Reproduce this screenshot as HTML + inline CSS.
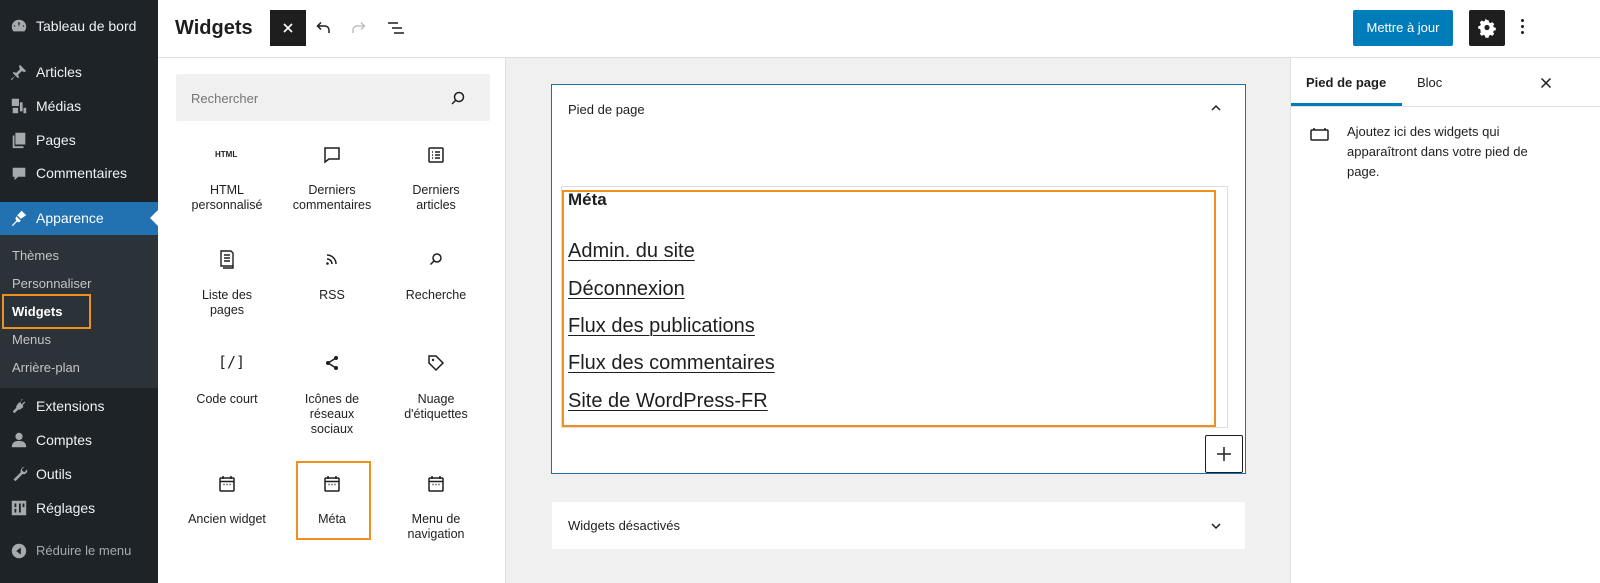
<!DOCTYPE html>
<html><head><meta charset="utf-8">
<style>
*{box-sizing:border-box;margin:0;padding:0}
body{width:1600px;height:583px;overflow:hidden;font-family:"Liberation Sans",sans-serif;background:#fff;position:relative;color:#1e1e1e}
.a{position:absolute}
#side{left:0;top:0;width:158px;height:583px;background:#1d2327}
.mi{position:absolute;left:36px;color:#f0f0f1;font-size:14px;white-space:nowrap}
.ic{position:absolute;left:10px;width:18px;height:18px;fill:#a7aaad}
.sm{position:absolute;left:12px;color:#c3c4c7;font-size:13px}
.lbl{position:absolute;width:110px;text-align:center;font-size:12.5px;line-height:15px;color:#1e1e1e}
.gi{position:absolute;width:24px;height:24px}
.lnk{position:absolute;left:568px;font-size:20px;text-decoration:underline;text-decoration-thickness:1px;text-underline-offset:3px;color:#1e1e1e}
</style></head><body>
<div id="side" class="a">
  <svg class="ic" style="top:17px" viewBox="0 0 20 20"><path d="M10 3a8 8 0 0 0-8 8c0 2 .7 3.7 2 5h12a8 8 0 0 0 2-5 8 8 0 0 0-8-8zm0 2.5l1 1-1 4.5-1-4.5zM5 9l1 1-1 1-1-1zm10 0l1 1-1 1-1-1z"/></svg>
  <div class="mi" style="top:18px">Tableau de bord</div>
  <svg class="ic" style="top:63px" viewBox="0 0 20 20"><path d="M11 2l7 7-2 1-3-1-4 4 1 3-1 1-3-3-4 5-1-1 5-4-3-3 1-1 3 1 4-4-1-3z"/></svg>
  <div class="mi" style="top:64px">Articles</div>
  <svg class="ic" style="top:97px" viewBox="0 0 20 20"><path d="M2 2h8v8H2zm9 4h3v10h-3zM3 12h6v6H3zm12 0h3v6h-3z"/></svg>
  <div class="mi" style="top:98px">Médias</div>
  <svg class="ic" style="top:131px" viewBox="0 0 20 20"><path d="M6 2h11v13H6zM3 5h2v12h10v2H3z"/></svg>
  <div class="mi" style="top:132px">Pages</div>
  <svg class="ic" style="top:165px" viewBox="0 0 20 20"><path d="M3 3h14v10H9l-4 4v-4H3z"/></svg>
  <div class="mi" style="top:165px">Commentaires</div>
  <div class="a" style="left:0;top:202px;width:158px;height:33px;background:#2271b1"></div>
  <div class="a" style="left:150px;top:210px;width:0;height:0;border-top:8px solid transparent;border-bottom:8px solid transparent;border-right:8px solid #fff"></div>
  <svg class="ic" style="top:209px;fill:#fff" viewBox="0 0 20 20"><path d="M13 2l5 5-6 4-4-4zM7 8l5 5-2 2-2-1-5 5-1-1 5-5-1-2z"/></svg>
  <div class="mi" style="top:210px;color:#fff">Apparence</div>
  <div class="a" style="left:0;top:235px;width:158px;height:153px;background:#2c3338"></div>
  <div class="sm" style="top:248px">Thèmes</div>
  <div class="sm" style="top:276px">Personnaliser</div>
  <div class="a" style="left:2px;top:294px;width:89px;height:35px;border:2px solid #f0901f"></div>
  <div class="sm" style="top:304px;color:#fff;font-weight:bold">Widgets</div>
  <div class="sm" style="top:332px">Menus</div>
  <div class="sm" style="top:360px">Arrière-plan</div>
  <svg class="ic" style="top:397px" viewBox="0 0 20 20"><path d="M13 2l1 1-3 3 2 2 3-3 1 1-3 3 1 2-4 3-2 0-4 4-2-2 4-4 0-2 3-4 2 1z"/></svg>
  <div class="mi" style="top:398px">Extensions</div>
  <svg class="ic" style="top:431px" viewBox="0 0 20 20"><circle cx="10" cy="6" r="4"/><path d="M2 18c0-5 3-7 8-7s8 2 8 7z"/></svg>
  <div class="mi" style="top:432px">Comptes</div>
  <svg class="ic" style="top:465px" viewBox="0 0 20 20"><path d="M16 2l-3 3 1 2 2 1 3-3c1 3-2 6-5 5l-8 8-2-2 8-8c-1-3 2-6 4-6z"/></svg>
  <div class="mi" style="top:466px">Outils</div>
  <svg class="ic" style="top:499px" viewBox="0 0 20 20"><path d="M2 2h16v16H2zm3 3v4h2V5zm0 6v4h2v-4zm5-6v10h2V5zm4 0v4h2V5z"/></svg>
  <div class="mi" style="top:500px">Réglages</div>
  <svg class="ic" style="top:542px" viewBox="0 0 20 20"><circle cx="10" cy="10" r="8"/><path d="M12 6v8l-5-4z" fill="#1d2327"/></svg>
  <div class="mi" style="top:543px;color:#a7aaad;font-size:13px">Réduire le menu</div>
</div>

<!-- header -->
<div class="a" style="left:158px;top:0;width:1442px;height:58px;border-bottom:1px solid #e0e0e0;background:#fff"></div>
<div class="a" style="left:175px;top:17px;font-size:20px;font-weight:bold">Widgets</div>
<div class="a" style="left:270px;top:10px;width:36px;height:36px;background:#1e1e1e"></div>
<svg class="a" style="left:276px;top:16px" width="24" height="24" viewBox="0 0 24 24"><path d="M8 8l8 8M16 8l-8 8" stroke="#fff" stroke-width="1.6"/></svg>
<svg class="a" style="left:311px;top:16px" width="24" height="24" viewBox="0 0 24 24"><path d="M18 17v-3a4 4 0 0 0-4-4H7M10 6.5L6.5 10 10 13.5" stroke="#1e1e1e" stroke-width="1.5" fill="none"/></svg>
<svg class="a" style="left:347px;top:16px" width="24" height="24" viewBox="0 0 24 24"><path d="M6 17v-3a4 4 0 0 1 4-4h7M14 6.5l3.5 3.5-3.5 3.5" stroke="#c0c0c0" stroke-width="1.5" fill="none"/></svg>
<svg class="a" style="left:384px;top:16px" width="24" height="24" viewBox="0 0 24 24"><path d="M4 7h10M8 12h10M10 17h10" stroke="#1e1e1e" stroke-width="1.5"/></svg>
<div class="a" style="left:1353px;top:10px;width:100px;height:36px;background:#007cba;border-radius:2px;color:#fff;font-size:13px;text-align:center;line-height:36px">Mettre à jour</div>
<div class="a" style="left:1469px;top:10px;width:36px;height:36px;background:#1e1e1e;border-radius:2px"></div>
<svg class="a" style="left:1477px;top:18px" width="20" height="20" viewBox="0 0 20 20"><path d="M10 2l1.6.3.4 2 1.5.8 1.8-1 1.9 2-1 1.7.6 1.6 2 .4v2.4l-2 .4-.6 1.6 1 1.7-1.9 2-1.8-1-1.5.8-.4 2H8.4l-.4-2-1.5-.8-1.8 1-1.9-2 1-1.7L3.2 11l-2-.4V8.2l2-.4.6-1.6-1-1.7 1.9-2 1.8 1L8 2.7l.4-2z" fill="#fff"/><circle cx="10" cy="9.5" r="2.6" fill="#1e1e1e"/></svg>
<div class="a" style="left:1521px;top:19px;width:3px;height:3px;border-radius:50%;background:#1e1e1e;box-shadow:0 6px 0 #1e1e1e,0 12px 0 #1e1e1e"></div>

<!-- inserter -->
<div class="a" style="left:505px;top:58px;width:1px;height:525px;background:#e0e0e0"></div>
<div class="a" style="left:176px;top:74px;width:314px;height:47px;background:#f0f0f0;border-radius:2px"></div>
<div class="a" style="left:191px;top:91px;font-size:13px;color:#757575">Rechercher</div>
<svg class="a" style="left:448px;top:88px" width="20" height="20" viewBox="0 0 20 20"><circle cx="11" cy="9" r="4.5" stroke="#1e1e1e" stroke-width="1.5" fill="none"/><path d="M8 12l-4 4" stroke="#1e1e1e" stroke-width="1.5"/></svg>

<div class="a" style="left:215px;top:150px;font-size:8px;font-weight:bold">HTML</div>
<svg class="gi" style="left:320px;top:143px" viewBox="0 0 24 24"><path d="M5 5h14v11H9l-4 3z" stroke="#1e1e1e" stroke-width="1.5" fill="none"/></svg>
<svg class="gi" style="left:424px;top:143px" viewBox="0 0 24 24"><rect x="5" y="5" width="14" height="14" rx="1" stroke="#1e1e1e" stroke-width="1.5" fill="none"/><path d="M8 9h1M11 9h5M8 12h1M11 12h5M8 15h1M11 15h5" stroke="#1e1e1e" stroke-width="1.5"/></svg>
<div class="lbl" style="left:172px;top:183px">HTML<br>personnalisé</div>
<div class="lbl" style="left:277px;top:183px">Derniers<br>commentaires</div>
<div class="lbl" style="left:381px;top:183px">Derniers<br>articles</div>

<svg class="gi" style="left:215px;top:247px" viewBox="0 0 24 24"><path d="M6 4h10l2 2v13H6z M9 8h6M9 11h6M9 14h6M18 8v13H8" stroke="#1e1e1e" stroke-width="1.4" fill="none"/></svg>
<svg class="gi" style="left:320px;top:247px" viewBox="0 0 24 24"><path d="M7 8a9 9 0 0 1 9 9M7 12a5 5 0 0 1 5 5" stroke="#1e1e1e" stroke-width="1.5" fill="none"/><circle cx="7.5" cy="16.5" r="1.3" fill="#1e1e1e"/></svg>
<svg class="gi" style="left:424px;top:247px" viewBox="0 0 24 24"><circle cx="13" cy="11" r="4" stroke="#1e1e1e" stroke-width="1.5" fill="none"/><path d="M10 14l-3.5 3.5" stroke="#1e1e1e" stroke-width="1.5"/></svg>
<div class="lbl" style="left:172px;top:288px">Liste des<br>pages</div>
<div class="lbl" style="left:277px;top:288px">RSS</div>
<div class="lbl" style="left:381px;top:288px">Recherche</div>

<div class="a" style="left:218px;top:353px;font-size:15px;font-family:'DejaVu Sans Mono',monospace">[/]</div>
<svg class="gi" style="left:320px;top:351px" viewBox="0 0 24 24"><path d="M16 7l-8 5 8 5" stroke="#1e1e1e" stroke-width="1.5" fill="none"/><circle cx="16" cy="7" r="2" fill="#1e1e1e"/><circle cx="8" cy="12" r="2" fill="#1e1e1e"/><circle cx="16" cy="17" r="2" fill="#1e1e1e"/></svg>
<svg class="gi" style="left:424px;top:351px" viewBox="0 0 24 24"><path d="M5 5h7l7 7-7 7-7-7z" stroke="#1e1e1e" stroke-width="1.5" fill="none" transform="rotate(0)"/><circle cx="9" cy="9" r="1.2" fill="#1e1e1e"/></svg>
<div class="lbl" style="left:172px;top:392px">Code court</div>
<div class="lbl" style="left:277px;top:392px">Icônes de<br>réseaux<br>sociaux</div>
<div class="lbl" style="left:381px;top:392px">Nuage<br>d'étiquettes</div>

<svg class="gi" style="left:215px;top:472px" viewBox="0 0 24 24"><rect x="5" y="6" width="14" height="13" rx="1" stroke="#1e1e1e" stroke-width="1.5" fill="none"/><path d="M5 9.5h14M8 4v3M16 4v3M8.5 12.5h1M11.5 12.5h1M14.5 12.5h1" stroke="#1e1e1e" stroke-width="1.5"/></svg>
<svg class="gi" style="left:320px;top:472px" viewBox="0 0 24 24"><rect x="5" y="6" width="14" height="13" rx="1" stroke="#1e1e1e" stroke-width="1.5" fill="none"/><path d="M5 9.5h14M8 4v3M16 4v3M8.5 12.5h1M11.5 12.5h1M14.5 12.5h1" stroke="#1e1e1e" stroke-width="1.5"/></svg>
<svg class="gi" style="left:424px;top:472px" viewBox="0 0 24 24"><rect x="5" y="6" width="14" height="13" rx="1" stroke="#1e1e1e" stroke-width="1.5" fill="none"/><path d="M5 9.5h14M8 4v3M16 4v3M8.5 12.5h1M11.5 12.5h1M14.5 12.5h1" stroke="#1e1e1e" stroke-width="1.5"/></svg>
<div class="a" style="left:296px;top:461px;width:75px;height:79px;border:2px solid #f0901f"></div>
<div class="lbl" style="left:172px;top:512px">Ancien widget</div>
<div class="lbl" style="left:277px;top:512px">Méta</div>
<div class="lbl" style="left:381px;top:512px">Menu de<br>navigation</div>

<!-- main -->
<div class="a" style="left:506px;top:58px;width:785px;height:525px;background:#f0f0f0"></div>
<div class="a" style="left:551px;top:84px;width:695px;height:390px;background:#fff;border:1.5px solid #1a73a8"></div>
<div class="a" style="left:568px;top:102px;font-size:13px">Pied de page</div>
<svg class="a" style="left:1208px;top:100px" width="16" height="16" viewBox="0 0 16 16"><path d="M4 10l4-4 4 4" stroke="#1e1e1e" stroke-width="1.5" fill="none"/></svg>
<div class="a" style="left:561px;top:186px;width:667px;height:242px;border:1px solid #ddd"></div>
<div class="a" style="left:562px;top:190px;width:654px;height:237px;border:2px solid #f0901f"></div>
<div class="a" style="left:568px;top:190px;font-size:17px;font-weight:bold">Méta</div>
<div class="lnk" style="top:240px">Admin. du site</div>
<div class="lnk" style="top:278px">Déconnexion</div>
<div class="lnk" style="top:315px">Flux des publications</div>
<div class="lnk" style="top:352px">Flux des commentaires</div>
<div class="lnk" style="top:390px">Site de WordPress-FR</div>
<div class="a" style="left:1205px;top:435px;width:38px;height:38px;border:1px solid #1e1e1e;background:#fff;border-radius:2px"></div>
<svg class="a" style="left:1214px;top:444px" width="20" height="20" viewBox="0 0 20 20"><path d="M10 3v14M3 10h14" stroke="#1e1e1e" stroke-width="1.5"/></svg>
<div class="a" style="left:552px;top:502px;width:693px;height:47px;background:#fff"></div>
<div class="a" style="left:568px;top:518px;font-size:13px">Widgets désactivés</div>
<svg class="a" style="left:1208px;top:518px" width="16" height="16" viewBox="0 0 16 16"><path d="M4 6l4 4 4-4" stroke="#1e1e1e" stroke-width="1.5" fill="none"/></svg>

<!-- right panel -->
<div class="a" style="left:1290px;top:58px;width:1px;height:525px;background:#e0e0e0"></div>
<div class="a" style="left:1291px;top:106px;width:309px;height:1px;background:#e0e0e0"></div>
<div class="a" style="left:1291px;top:103px;width:111px;height:3px;background:#007cba"></div>
<div class="a" style="left:1306px;top:75px;font-size:13px;font-weight:bold">Pied de page</div>
<div class="a" style="left:1417px;top:75px;font-size:13px">Bloc</div>
<svg class="a" style="left:1538px;top:75px" width="16" height="16" viewBox="0 0 16 16"><path d="M3.5 3.5l9 9M12.5 3.5l-9 9" stroke="#1e1e1e" stroke-width="1.5"/></svg>
<svg class="a" style="left:1309px;top:124px" width="22" height="20" viewBox="0 0 22 20"><rect x="2" y="6" width="17" height="10" rx="1" stroke="#1e1e1e" stroke-width="1.5" fill="none"/><path d="M5 4v2M16 4v2" stroke="#1e1e1e" stroke-width="1.5"/></svg>
<div class="a" style="left:1347px;top:122px;width:200px;font-size:13px;line-height:20px">Ajoutez ici des widgets qui apparaîtront dans votre pied de page.</div>
</body></html>
